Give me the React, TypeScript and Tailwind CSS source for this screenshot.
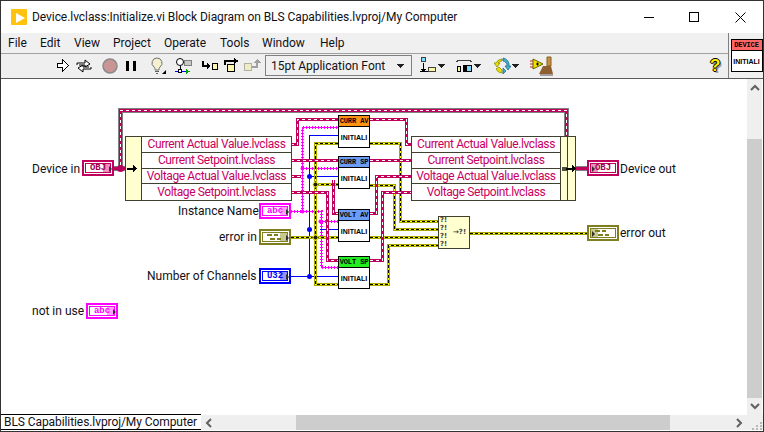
type P = { className?: string };

const classWires = [
  'M291 144.5H297.5V119.5H338',
  'M370 119.5H406.5V144.5H411',
  'M291 160.5H338',
  'M370 160.5H411',
  'M291 176.5H301',
  'M333.5 180V213.5H338',
  'M291 192.5H327.5V260.5H338',
  'M370 213.5H376.5V176.5H411',
  'M370 260.5H382.5V192.5H411',
];

const errorWires = [
  'M291 237.5H338',
  'M338 143.5H315.5V284.5H338',
  'M315.5 184.5H338',
  'M370 143.5H400.5V221.5H438',
  'M370 185.5H394.5V229.5H438',
  'M370 237.5H438',
  'M370 284.5H388.5V245.5H438',
  'M470 233.5H587',
];

const stringWires = [
  'M291 211.5H321.5V267.5H338',
  'M302.5 211.5V127.5H338',
  'M302.5 168.5H338',
  'M321.5 221.5H338',
];

const blueWires = [
  'M291 276.5H338',
  'M309.5 276.5V135.5H338',
  'M309.5 176.5H338',
  'M309.5 229.5H312',
  'M320 229.5H338',
];

function Wires() {
  const outer = 'M120.5 171V110.5H566.5V136';
  return (
    <svg className="absolute left-0 top-0" width="764" height="432" fill="none" shapeRendering="crispEdges">
      <path d={outer} stroke="#808080" strokeWidth="5" />
      <path d={outer} stroke="#c0005c" strokeWidth="3" />
      <path d={outer} stroke="#ffffff" strokeWidth="1" strokeDasharray="3 3" />
      <path d="M114 168.5H125" stroke="#808080" strokeWidth="5" />
      <path d="M114 168.5H125" stroke="#c0005c" strokeWidth="3" />
      <path d="M576 168.5H587" stroke="#808080" strokeWidth="5" />
      <path d="M576 168.5H587" stroke="#c0005c" strokeWidth="3" />
      {stringWires.map((d) => (
        <g key={d}>
          <path d={d} stroke="#ff00ff" strokeWidth="1" />
          <path d={d} stroke="#ff00ff" strokeWidth="3" strokeDasharray="1 2" />
        </g>
      ))}
      {blueWires.map((d) => (
        <path key={d} d={d} stroke="#0000ff" strokeWidth="1" />
      ))}
      {errorWires.map((d) => (
        <g key={d}>
          <path d={d} stroke="#a8a800" strokeWidth="3" />
          <path d={d} stroke="#ffff00" strokeWidth="1" />
          <path d={d} stroke="#000000" strokeWidth="1" strokeDasharray="3 2" />
        </g>
      ))}
      {classWires.map((d) => (
        <g key={d}>
          <path d={d} stroke="#c0005c" strokeWidth="3" />
          <path d={d} stroke="#ffffff" strokeWidth="1" strokeDasharray="3 3" />
        </g>
      ))}
      <g shapeRendering="auto">
        <circle cx="120.5" cy="168.5" r="3.5" fill="#b8005a" />
        <circle cx="309.5" cy="176.5" r="2.5" fill="#0000ff" />
        <circle cx="309.5" cy="229.5" r="2.5" fill="#0000ff" />
        <circle cx="309.5" cy="276.5" r="2.5" fill="#0000ff" />
        <circle cx="302.5" cy="168.5" r="2" fill="#ff00ff" />
        <circle cx="302.5" cy="211.5" r="2" fill="#ff00ff" />
        <circle cx="320.5" cy="221.5" r="2" fill="#ff00ff" />
        <circle cx="315.5" cy="184.5" r="2.5" fill="#202000" stroke="#f4f400" />
        <circle cx="315.5" cy="237.5" r="2.5" fill="#202000" stroke="#f4f400" />
      </g>
    </svg>
  );
}

function ClusterGlyph() {
  return (
    <svg width="18" height="8" viewBox="0 0 18 8" shapeRendering="crispEdges">
      <path d="M1 1h5v2H1zM8 1h4v2H8zM4 5h5v2H4zM11 5h4v2h-4z" fill="#7f7f20" />
    </svg>
  );
}

const terminalStyles = {
  cls: { box: 'border-[#c0005c]', text: 'text-[#a00050]', tint: 'bg-[#f090c0]' },
  str: { box: 'border-[#ff00ff]', text: 'text-[#ff00ff]', tint: 'bg-[#ffa0ff]' },
  err: { box: 'border-[#7f7f20]', text: 'text-[#7f7f20]', tint: 'bg-[#c8c890]' },
  u32: { box: 'border-[#0000ff]', text: 'text-[#0000ff]', tint: 'bg-[#9090ff]' },
};

function Terminal({
  className,
  kind,
  label,
  out,
}: P & { kind: keyof typeof terminalStyles; label?: string; out?: boolean }) {
  const s = terminalStyles[kind];
  return (
    <div className={`absolute h-[16px] w-[32px] border-2 bg-white p-px ${s.box} ${className}`}>
      <div className={`relative flex h-full items-center justify-center border ${s.box}`}>
        <div className={`absolute bottom-0 top-0 w-[7px] ${s.tint} ${out ? 'left-0' : 'right-0'}`} />
        {label ? (
          <span className={`relative font-['Liberation_Mono',monospace] text-[9px] font-bold leading-none ${s.text}`}>
            {label}
          </span>
        ) : (
          <span className="relative flex">
            <ClusterGlyph />
          </span>
        )}
        <div
          className={`absolute top-[2px] h-0 w-0 border-y-[3px] border-l-[3px] border-y-transparent border-l-[#303030] ${
            out ? 'left-[1px]' : 'right-[-2px]'
          }`}
        />
      </div>
    </div>
  );
}

const headers = {
  orange: 'bg-[#ff9414]',
  blue: 'bg-[#6a9cf8]',
  green: 'bg-[#22ee22]',
  red: 'bg-[#ff6666]',
};

function ViNode({
  className,
  color,
  title,
}: P & { color: keyof typeof headers; title: string }) {
  return (
    <div
      className={`flex h-[33px] w-[32px] flex-col border border-black bg-white text-[7px] font-bold leading-none text-black ${className}`}
    >
      <div
        className={`flex h-[10px] items-center justify-center whitespace-nowrap font-['Liberation_Mono',monospace] tracking-[-0.1px] ${headers[color]}`}
      >
        {title}
      </div>
      <div className="flex flex-1 items-center justify-center border-t border-black font-['Liberation_Sans',sans-serif]">
        INITIALI
      </div>
    </div>
  );
}

function ClassList({ className }: P) {
  const rows = [
    'Current Actual Value.lvclass',
    'Current Setpoint.lvclass',
    'Voltage Actual Value.lvclass',
    'Voltage Setpoint.lvclass',
  ];
  return (
    <div className={`flex flex-col divide-y divide-[#404030] bg-white ${className}`}>
      {rows.map((r) => (
        <div
          key={r}
          className="flex h-[16px] items-center justify-center whitespace-nowrap leading-none tracking-[-0.4px] text-[#c8005f]"
        >
          {r}
        </div>
      ))}
    </div>
  );
}

function Arrow({ className }: P) {
  return (
    <svg className={`absolute ${className}`} width="10" height="7" viewBox="0 0 10 7" shapeRendering="crispEdges">
      <path d="M0 2.5h6V0l4 3.5L6 7V4.5H0z" fill="#000000" />
    </svg>
  );
}

function Diagram() {
  return (
    <div className="absolute left-[-1px] top-[-79px] h-[432px] w-[764px] font-['Roboto',sans-serif] text-[12px] text-[#101018]">
      <Wires />

      <span className="absolute left-[32px] top-[160px]">Device in</span>
      <Terminal className="left-[82px] top-[160px]" kind="cls" label="OBJ" />
      <span className="absolute left-[178px] top-[202px]">Instance Name</span>
      <Terminal className="left-[259px] top-[203px]" kind="str" label="abc" />
      <span className="absolute left-[219px] top-[228px]">error in</span>
      <Terminal className="left-[259px] top-[229px]" kind="err" />
      <span className="absolute left-[147px] top-[267px]">Number of Channels</span>
      <Terminal className="left-[259px] top-[268px]" kind="u32" label="U32" />
      <span className="absolute left-[32px] top-[302px]">not in use</span>
      <Terminal className="left-[86px] top-[303px]" kind="str" label="abc" />

      <div className="absolute left-[125px] top-[136px] flex h-[65px] border border-[#404030] bg-[#ffffd0]">
        <div className="w-[15px]" />
        <ClassList className="w-[150px] border-l border-[#404030]" />
      </div>
      <Arrow className="left-[127px] top-[165px]" />

      <div className="absolute left-[411px] top-[136px] flex h-[65px] border border-[#404030] bg-[#ffffd0]">
        <ClassList className="w-[149px] border-r border-[#404030]" />
        <div className="w-[7px] border-r border-[#404030]" />
        <div className="w-[7px]" />
      </div>
      <div className="absolute left-[562px] top-[167px] h-[4px] w-[6px] bg-[#505040]" />
      <Arrow className="left-[566px] top-[165px]" />

      <ViNode className="absolute left-[338px] top-[115px]" color="orange" title="CURR AV" />
      <ViNode className="absolute left-[338px] top-[156px]" color="blue" title="CURR SP" />
      <ViNode className="absolute left-[338px] top-[209px]" color="blue" title="VOLT AV" />
      <ViNode className="absolute left-[338px] top-[256px]" color="green" title="VOLT SP" />

      <div className="absolute left-[438px] top-[216px] flex h-[33px] w-[32px] items-center border border-[#404030] bg-[#ffffd0] font-['DejaVu_Sans',sans-serif] text-[7px] font-bold leading-none text-[#404040]">
        <div className="flex h-full w-[8px] flex-col justify-around pl-px">
          <span>?!</span>
          <span>?!</span>
          <span>?!</span>
          <span>?!</span>
        </div>
        <span className="ml-[6px] whitespace-nowrap">→?!</span>
      </div>

      <Terminal className="left-[587px] top-[160px]" kind="cls" label="OBJ" out />
      <span className="absolute left-[620px] top-[160px]">Device out</span>
      <Terminal className="left-[587px] top-[225px]" kind="err" out />
      <span className="absolute left-[620px] top-[224px]">error out</span>
    </div>
  );
}

function RunIcon() {
  return (
    <svg width="12" height="13" viewBox="0 0 12 13" shapeRendering="crispEdges">
      <path d="M.5 4.5h5v-4l6 6-6 6v-4h-5z" fill="#ffffff" stroke="#000000" />
    </svg>
  );
}

function RunContinuousIcon() {
  return (
    <svg width="16" height="14" viewBox="0 0 16 14">
      <path d="M1 6V4h8V1l5 4-5 3V6H3" fill="#ffffff" stroke="#000000" />
      <path d="M15 8v2H7v3L2 9l5-3v2h6" fill="#ffffff" stroke="#000000" />
    </svg>
  );
}

function AbortIcon() {
  return (
    <svg width="16" height="16" viewBox="0 0 16 16">
      <circle cx="8" cy="8" r="7" fill="#c89494" stroke="#8a8a8a" strokeWidth="1.5" />
    </svg>
  );
}

function PauseIcon() {
  return (
    <svg width="10" height="10" viewBox="0 0 10 10" shapeRendering="crispEdges">
      <path d="M0 0h3v10H0zM7 0h3v10H7z" fill="#000000" />
    </svg>
  );
}

function BulbIcon() {
  return (
    <svg width="16" height="18" viewBox="0 0 16 18">
      <path d="M6 1a5 5 0 0 0-3 9c1 1 1 2 1 3h4c0-1 0-2 1-3a5 5 0 0 0-3-9z" fill="#f4f0d0" stroke="#707070" />
      <path d="M4 14h4v1H4zM5 16h2v1H5z" fill="#606060" />
      <path d="M11 17l4-4v4z" fill="#000000" />
    </svg>
  );
}

function RetainIcon() {
  return (
    <svg width="18" height="16" viewBox="0 0 18 16" shapeRendering="crispEdges">
      <rect x="9.5" y="2.5" width="7" height="5" fill="#c8c8c8" stroke="#808080" />
      <circle cx="5" cy="4" r="3.5" fill="#ffffff" stroke="#000000" shapeRendering="auto" />
      <path d="M5 8v4" stroke="#000000" />
      <path d="M0 13h11" stroke="#0000ff" />
      <rect x="3.5" y="11.5" width="3" height="3" fill="#ffffff" stroke="#000000" />
      <path d="M11 11l4 2.5-4 2.5z" fill="#00a000" />
    </svg>
  );
}

function StepIntoIcon() {
  return (
    <svg width="17" height="14" viewBox="0 0 17 14" shapeRendering="crispEdges">
      <path d="M1 2v5h6" stroke="#000000" strokeWidth="2" fill="none" />
      <path d="M5 4l4 3-4 3z" fill="#000000" />
      <rect x="10.5" y="4.5" width="5" height="6" fill="#fdf6b0" stroke="#000000" />
    </svg>
  );
}

function StepOverIcon() {
  return (
    <svg width="16" height="16" viewBox="0 0 16 16" shapeRendering="crispEdges">
      <path d="M1 7V3h10" stroke="#000000" strokeWidth="2" fill="none" />
      <path d="M10 0l5 3-5 3z" fill="#000000" />
      <rect x="3.5" y="6.5" width="7" height="7" fill="#fdf6b0" stroke="#000000" />
    </svg>
  );
}

function StepOutIcon() {
  return (
    <svg width="17" height="16" viewBox="0 0 17 16" shapeRendering="crispEdges">
      <rect x="0.5" y="5.5" width="7" height="7" fill="#f0ecc8" stroke="#b0b0a0" />
      <path d="M8 9h5V5" stroke="#a0a0a0" strokeWidth="2" fill="none" />
      <path d="M9 5l4-4 4 4z" fill="#a0a0a0" />
    </svg>
  );
}

function Caret({ className }: P) {
  return (
    <svg className={className} width="7" height="4" viewBox="0 0 7 4" shapeRendering="crispEdges">
      <path d="M0 0h7L3.5 4z" fill="#202020" />
    </svg>
  );
}

function AlignIcon() {
  return (
    <span className="flex items-start">
      <svg width="17" height="18" viewBox="0 0 17 18" shapeRendering="crispEdges">
        <rect x="1.5" y="0.5" width="4" height="4" fill="#80e0ff" stroke="#404040" />
        <path d="M3.5 6v9M0 14.5h16" stroke="#000000" fill="none" />
        <path d="M1 12l2.5 3 2.5-3z" fill="#000000" />
        <rect x="8.5" y="10.5" width="7" height="4" fill="#fdf6a0" stroke="#404040" />
      </svg>
      <Caret className="ml-[1px] mt-[7px]" />
    </span>
  );
}

function DistributeIcon() {
  return (
    <span className="flex items-start">
      <svg width="17" height="18" viewBox="0 0 17 18" shapeRendering="crispEdges">
        <path d="M0 5l3-2h10l3 2" stroke="#404040" fill="none" />
        <rect x="1.5" y="9.5" width="3" height="5" fill="#fdf6a0" stroke="#000000" />
        <rect x="6.5" y="7.5" width="3" height="7" fill="#000000" />
        <rect x="10.5" y="8.5" width="5" height="6" fill="#80d8ff" stroke="#000000" />
      </svg>
      <Caret className="ml-[1px] mt-[7px]" />
    </span>
  );
}

function ReorderIcon() {
  return (
    <span className="flex items-start">
      <svg width="17" height="18" viewBox="0 0 17 18">
        <path d="M8 2a7 7 0 0 0-6 4l-2 0 3 4 3-4H4a5 5 0 0 1 4-2z" fill="#e8e000" stroke="#808000" strokeWidth="0.7" />
        <path d="M8 16a7 7 0 0 1-6-4l3-2 3 3z" fill="#e8e000" stroke="#808000" strokeWidth="0.7" />
        <path d="M9 1a7 7 0 0 1 6 8l2 0-3 4-3-4h2a5 5 0 0 0-4-5z" fill="#40b0d0" stroke="#106080" strokeWidth="0.7" />
        <path d="M9 17l3-3-3-3z" fill="#40b0d0" stroke="#106080" strokeWidth="0.7" />
      </svg>
      <Caret className="ml-[1px] mt-[7px]" />
    </span>
  );
}

function CleanupIcon() {
  return (
    <svg width="23" height="20" viewBox="0 0 23 20">
      <path d="M0 5h4M0 8h4M0 11h4" stroke="#d02020" strokeWidth="1" />
      <path d="M3 3l10 5-10 5z" fill="#f0e000" stroke="#606000" />
      <path d="M6 8h3M7.5 6.5v3" stroke="#000000" />
      <path d="M17 1h4v9h-4z" fill="#c89040" stroke="#806020" />
      <path d="M13 10h8l2 8H9z" fill="#906030" />
      <path d="M10 19h13" stroke="#a0a0a0" strokeWidth="2" />
    </svg>
  );
}

function HelpIcon() {
  return (
    <span className="font-['Liberation_Sans',sans-serif] text-[17px] font-bold leading-none text-[#ffee00] [text-shadow:1px_0_0_#000,-1px_0_0_#000,0_1px_0_#000,0_-1px_0_#000,2px_2px_0_#999]">
      ?
    </span>
  );
}

function Toolbar() {
  return (
    <div className="flex h-[24px] items-center border-t border-[#a0a0a0] bg-[#efefef] pl-[56px]">
      <RunIcon />
      <span className="ml-[7px] flex"><RunContinuousIcon /></span>
      <span className="ml-[10px] flex"><AbortIcon /></span>
      <span className="ml-[8px] flex"><PauseIcon /></span>
      <span className="ml-[15px] flex"><BulbIcon /></span>
      <span className="ml-[8px] flex"><RetainIcon /></span>
      <span className="ml-[9px] flex"><StepIntoIcon /></span>
      <span className="ml-[5px] flex"><StepOverIcon /></span>
      <span className="ml-[4px] flex"><StepOutIcon /></span>
      <div className="ml-[4px] flex h-[21px] w-[147px] items-center justify-between border border-[#808080] bg-[#f0f0f0] pl-[5px] pr-[7px] text-[12px] text-[#101018]">
        <span className="whitespace-nowrap">15pt Application Font</span>
        <Caret />
      </div>
      <span className="ml-[8px] flex"><AlignIcon /></span>
      <span className="ml-[11px] flex"><DistributeIcon /></span>
      <span className="ml-[13px] flex"><ReorderIcon /></span>
      <span className="ml-[11px] flex"><CleanupIcon /></span>
      <span className="ml-[157px] flex"><HelpIcon /></span>
    </div>
  );
}

function Chevron({ dir }: { dir: 'up' | 'down' | 'left' | 'right' }) {
  const paths = {
    up: 'M1 7l4-4 4 4',
    down: 'M1 3l4 4 4-4',
    left: 'M7 1L3 5l4 4',
    right: 'M3 1l4 4-4 4',
  };
  return (
    <svg width="10" height="10" viewBox="0 0 10 10">
      <path d={paths[dir]} stroke="#606060" strokeWidth="2" fill="none" />
    </svg>
  );
}

export default function App() {
  return (
    <div className="flex h-[432px] w-[764px] flex-col overflow-hidden border border-[#333333] bg-white font-['Roboto',sans-serif] text-[#101018]">
      {/* title bar */}
      <div className="flex h-[32px] items-center bg-white pl-[10px]">
        <svg width="16" height="16" viewBox="0 0 16 16">
          <rect width="16" height="16" rx="1" fill="#ffc20e" />
          <path d="M5 4l9 5-9 5z" fill="#ffffff" />
        </svg>
        <span className="ml-[5px] whitespace-nowrap text-[12px] tracking-[-0.06px]">
          Device.lvclass:Initialize.vi Block Diagram on BLS Capabilities.lvproj/My Computer
        </span>
        <div className="ml-auto flex items-center">
          <svg width="10" height="10" viewBox="0 0 10 10" shapeRendering="crispEdges" className="mr-[35px]">
            <path d="M0 5.5h10" stroke="#000000" />
          </svg>
          <svg width="10" height="10" viewBox="0 0 10 10" shapeRendering="crispEdges" className="mr-[36px]">
            <rect x="0.5" y="0.5" width="9" height="9" fill="none" stroke="#000000" />
          </svg>
          <svg width="11" height="11" viewBox="0 0 11 11" className="mr-[17px]">
            <path d="M.5.5l10 10M10.5.5l-10 10" stroke="#000000" />
          </svg>
        </div>
      </div>

      {/* menu and toolbar, with the VI icon beside them */}
      <div className="flex h-[46px] border-b border-[#5a5a5a] bg-[#f0f0f0]">
        <div className="flex w-[727px] flex-col">
          <nav className="flex h-[20px] items-center pl-[7px] text-[12px]">
            <span className="w-[32px]">File</span>
            <span className="w-[34px]">Edit</span>
            <span className="w-[39px]">View</span>
            <span className="w-[51px]">Project</span>
            <span className="w-[56px]">Operate</span>
            <span className="w-[42px]">Tools</span>
            <span className="w-[58px]">Window</span>
            <span>Help</span>
          </nav>
          <Toolbar />
        </div>
        <div className="flex flex-1 items-center justify-center border-l border-[#808080] pl-px">
          <ViNode color="red" title="DEVICE" />
        </div>
      </div>

      {/* canvas and scrollbars */}
      <div className="flex flex-1 flex-col">
        <div className="flex flex-1">
          <div className="relative flex-1 overflow-hidden bg-white">
            <Diagram />
          </div>
          <div className="mr-px flex w-[15px] flex-col items-center bg-[#efefef]">
            <span className="mt-[4px] flex h-[10px]"><Chevron dir="up" /></span>
            <div className="mt-[46px] h-[259px] w-full bg-[#cdcdcd]" />
            <span className="mt-[3px] flex h-[10px]"><Chevron dir="down" /></span>
          </div>
        </div>
        <div className="relative mb-px flex h-[15px] items-center bg-[#efefef]">
          <div className="absolute bottom-0 left-0 top-[-1px] flex w-[200px] items-center border-y border-black bg-white pl-[3px] text-[12px] leading-none tracking-[-0.08px]">
            <span className="whitespace-nowrap">BLS Capabilities.lvproj/My Computer</span>
          </div>
          <span className="ml-[203px] flex"><Chevron dir="left" /></span>
          <div className="ml-[82px] h-full w-[374px] bg-[#cdcdcd]" />
          <span className="ml-[64px] flex"><Chevron dir="right" /></span>
          <svg className="absolute bottom-0 right-px" width="10" height="8" viewBox="0 0 10 8" shapeRendering="crispEdges">
            <path d="M8 0h2v2H8zM4 3h2v2H4zM8 3h2v2H8zM0 6h2v2H0zM4 6h2v2H4zM8 6h2v2H8z" fill="#b8b8b8" />
          </svg>
        </div>
      </div>
    </div>
  );
}
